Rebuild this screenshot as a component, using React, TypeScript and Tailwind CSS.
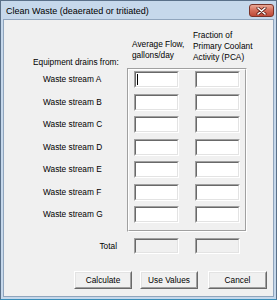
import React from "react";

const font = { fontFamily: '"Liberation Sans", Arial, sans-serif' };

function Sunken({ w, h, disabled, children }: { w: number; h: number; disabled?: boolean; children?: React.ReactNode }) {
  return (
    <div
      className="border border-t-[#a0a0a0] border-l-[#a0a0a0] border-r-white border-b-white"
      style={{ width: w, height: h }}
    >
      <div
        className={
          "w-full h-full border border-t-[#696969] border-l-[#696969] border-r-[#e3e3e3] border-b-[#e3e3e3] flex items-center " +
          (disabled ? "bg-[#f0f0f0]" : "bg-white")
        }
      >
        {children}
      </div>
    </div>
  );
}

function Btn({ label, className }: { label: string; className: string }) {
  return (
    <div className={"h-[18px] border border-t-white border-l-white border-r-[#696969] border-b-[#696969] " + className}>
      <div className="w-full h-full border border-t-[#e3e3e3] border-l-[#e3e3e3] border-r-[#a0a0a0] border-b-[#a0a0a0] bg-[#f0f0f0] flex items-center justify-center text-black leading-none">
        {label}
      </div>
    </div>
  );
}

const rows = ["A", "B", "C", "D", "E", "F", "G"];

export default function App() {
  return (
    <div
      className="w-[277px] h-[300px] bg-[#c6d8eb] border border-[#5a7089] border-b-[#3a8fba] flex flex-col text-[8.3px] text-black"
      style={font}
    >
      {/* Title bar */}
      <div className="h-[18px] flex items-start justify-between pl-[5px] pr-[2px]">
        <div className="text-[9px] leading-none mt-[6px] text-black">Clean Waste (deaerated or tritiated)</div>
        <div className="mt-[3px] w-[25px] h-[13px] rounded-[3px] border border-[#7a3328] bg-gradient-to-b from-[#e9a896] via-[#d36d5a] to-[#bf4a38] flex items-center justify-center">
          <svg width="11" height="8" viewBox="0 0 11 8">
            <path d="M2 1 L9 7 M9 1 L2 7" stroke="#5a1e16" strokeWidth="3" strokeLinecap="round" />
            <path d="M2 1 L9 7 M9 1 L2 7" stroke="#ffffff" strokeWidth="1.6" strokeLinecap="round" />
          </svg>
        </div>
      </div>

      {/* Client area */}
      <div className="flex-1 mx-[2px] mb-[2px] border border-[#90a5bd] bg-[#f0f0f0] flex flex-col">
        {/* Header */}
        <div className="mt-[9px] h-[39px] flex items-end leading-[11px]">
          <div className="w-[128px] pl-[29px] whitespace-nowrap">Equipment drains from:</div>
          <div className="w-[61px] mb-[7.5px] whitespace-nowrap">
            <div>Average Flow,</div>
            <div>gallons/day</div>
          </div>
          <div className="mb-[5.5px] whitespace-nowrap">
            <div>Fraction of</div>
            <div>Primary Coolant</div>
            <div>Activity (PCA)</div>
          </div>
        </div>

        {/* Body */}
        <div className="flex">
          <div className="w-[123px] pl-[39px] pt-[3px] flex flex-col gap-[5.5px]">
            {rows.map((r) => (
              <div key={r} className="h-[17px] flex items-center leading-none whitespace-nowrap">
                Waste stream {r}
              </div>
            ))}
          </div>
          <div className="w-[120px] h-[164px] border border-t-[#a0a0a0] border-l-[#a0a0a0] border-r-white border-b-white">
            <div className="w-full h-full border border-t-white border-l-white border-r-[#a0a0a0] border-b-[#a0a0a0] pl-[5px] pt-[1px] flex flex-col gap-[5.5px]">
              {rows.map((r, i) => (
                <div key={r} className="flex gap-[16px]">
                  <Sunken w={45} h={17}>
                    {i === 0 && <div className="ml-[1px] w-[1px] h-[11px] bg-black" />}
                  </Sunken>
                  <Sunken w={45} h={17} />
                </div>
              ))}
            </div>
          </div>
        </div>

        {/* Total */}
        <div className="mt-[6px] flex items-center h-[16px]">
          <div className="w-[123px] text-right pr-[10px] leading-none">Total</div>
          <div className="ml-[7px]">
            <Sunken w={45} h={16} disabled />
          </div>
          <div className="ml-[16px]">
            <Sunken w={45} h={16} disabled />
          </div>
        </div>

        {/* Buttons */}
        <div className="mt-[17px] flex">
          <Btn label="Calculate" className="ml-[70px] w-[58px]" />
          <Btn label="Use Values" className="ml-[8px] w-[58px]" />
          <Btn label="Cancel" className="ml-[10px] w-[59px]" />
        </div>
      </div>
    </div>
  );
}
